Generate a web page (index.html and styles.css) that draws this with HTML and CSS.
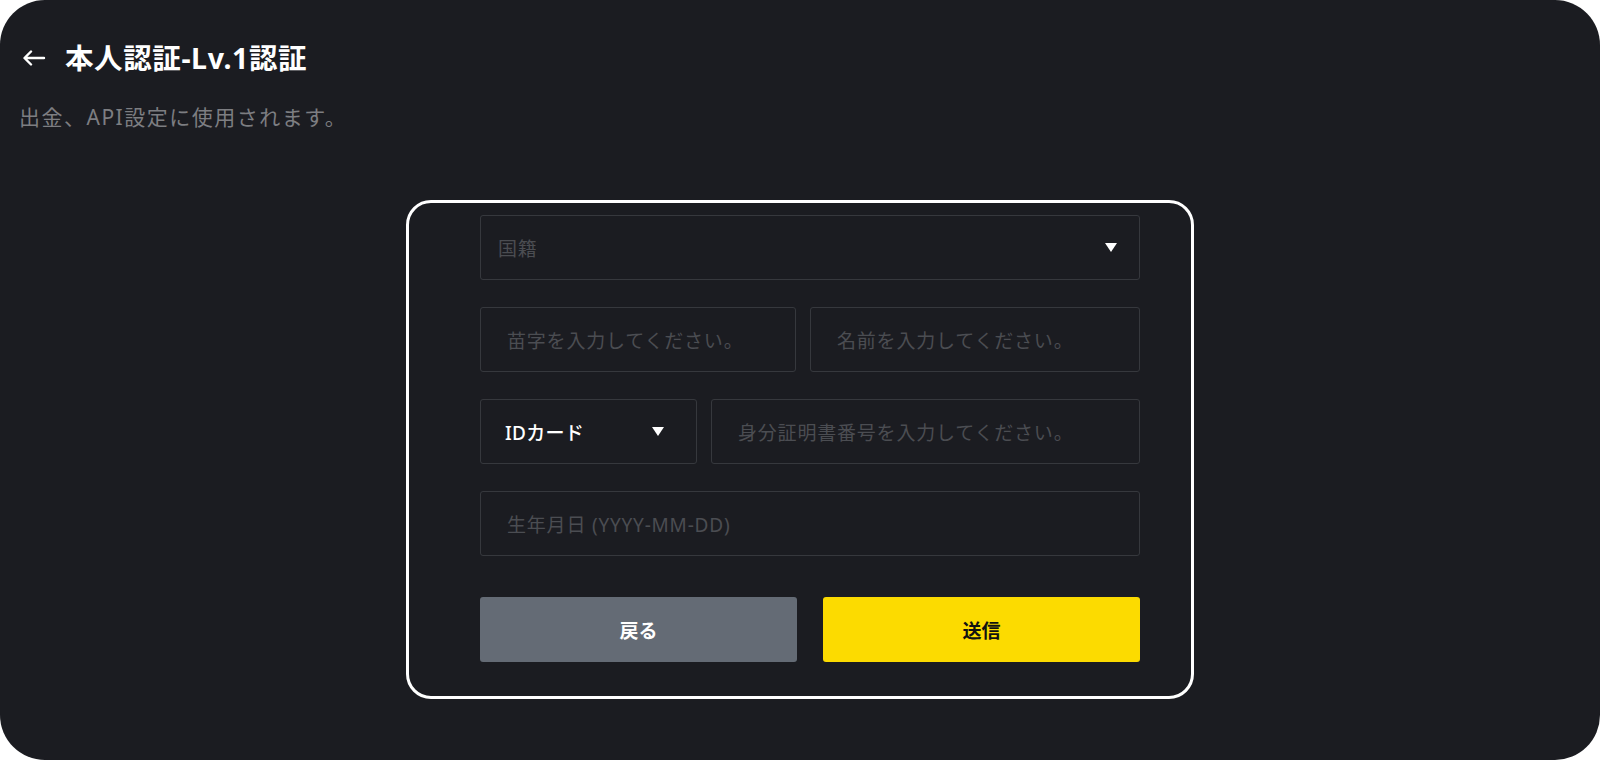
FILE: index.html
```html
<!DOCTYPE html>
<html lang="ja">
<head>
    <meta charset="UTF-8">
    <title>本人認証</title>
    <link rel="stylesheet" href="styles.css">
</head>
<body>
    <div class="screen">
        <div class="head">
            <span class="back">
                <svg width="24" height="16" viewBox="0 0 24 16"><path d="M22 8H3M9 1.5L2.5 8L9 14.5" fill="none" stroke="#fff" stroke-width="2.4" stroke-linecap="round" stroke-linejoin="round"/></svg>
            </span>
            <h1 class="title">本人認証-Lv.1認証</h1>
        </div>
        <p class="sub">出金、API設定に使用されます。</p>

        <div class="card">
            <div class="form">
                <div class="field select country">
                    <span class="ph">国籍</span>
                    <span class="tri"></span>
                </div>
                <div class="row names">
                    <div class="field"><span class="ph">苗字を入力してください。</span></div>
                    <div class="field"><span class="ph">名前を入力してください。</span></div>
                </div>
                <div class="row idrow">
                    <div class="field select idtype">
                        <span class="val">IDカード</span>
                        <span class="tri"></span>
                    </div>
                    <div class="field"><span class="ph">身分証明書番号を入力してください。</span></div>
                </div>
                <div class="field"><span class="ph">生年月日 (YYYY-MM-DD)</span></div>
                <div class="btns">
                    <button class="btn btn-back">戻る</button>
                    <button class="btn btn-send">送信</button>
                </div>
            </div>
        </div>
    </div>
</body>
</html>
```

FILE: styles.css
```css
*{
    margin: 0;
    padding: 0;
    box-sizing: border-box;
}
body{
    background-color: #fff;
    font-family: "Noto Sans", "Noto Sans CJK JP", sans-serif;
}
.screen{
    width: 1600px;
    height: 760px;
    background-color: #1b1c21;
    border-radius: 45px;
    padding: 38px 0 0 0;
    overflow: hidden;
}
.head{
    display: flex;
    align-items: center;
    padding-left: 22px;
    height: 40px;
}
.back{
    display: flex;
    width: 24px;
    margin-right: 19px;
}
.title{
    color: #fff;
    font-size: 28.5px;
    font-weight: 700;
    letter-spacing: 0.6px;
    line-height: 40px;
}
.sub{
    color: #7d7e82;
    font-size: 21px;
    letter-spacing: 1.5px;
    line-height: 28px;
    padding-left: 19px;
    margin-top: 25px;
}

/* フォームカード */
.card{
    width: 788px;
    height: 499px;
    margin: 69px auto 0;
    border: 3px solid #fff;
    border-radius: 25px;
    padding: 12px 51px 0 71px;
}
.form{
    display: flex;
    flex-direction: column;
    gap: 27px;
}
.row{
    display: flex;
    gap: 14px;
}
.names .field:first-child{
    width: 316px;
}
.names .field:last-child{
    flex: 1;
}
.idrow .idtype{
    width: 217px;
}
.idrow .field:last-child{
    flex: 1;
}
.field{
    height: 65px;
    border: 1px solid #36383d;
    border-radius: 3px;
    display: flex;
    align-items: center;
    padding: 0 22px 0 26px;
    font-size: 19px;
    letter-spacing: 0.8px;
}
.ph{
    color: #4b4d52;
}
.country{
    padding-left: 17px;
}
.select{
    justify-content: space-between;
}
.idtype{
    padding-left: 24px;
    padding-right: 32px;
}
.val{
    color: #fff;
    font-size: 19px;
    font-weight: 500;
    letter-spacing: 0.3px;
}
.tri{
    width: 0;
    height: 0;
    border-left: 6px solid transparent;
    border-right: 6px solid transparent;
    border-top: 9px solid #fff;
}
.btns{
    display: flex;
    gap: 26px;
    margin-top: 14px;
}
.btn{
    flex: 1;
    height: 65px;
    border: none;
    border-radius: 3px;
    font-family: inherit;
    font-size: 19px;
    font-weight: 700;
}
.btn-back{
    background-color: #646b75;
    color: #fff;
}
.btn-send{
    background-color: #fcdb00;
    color: #111;
}
```
